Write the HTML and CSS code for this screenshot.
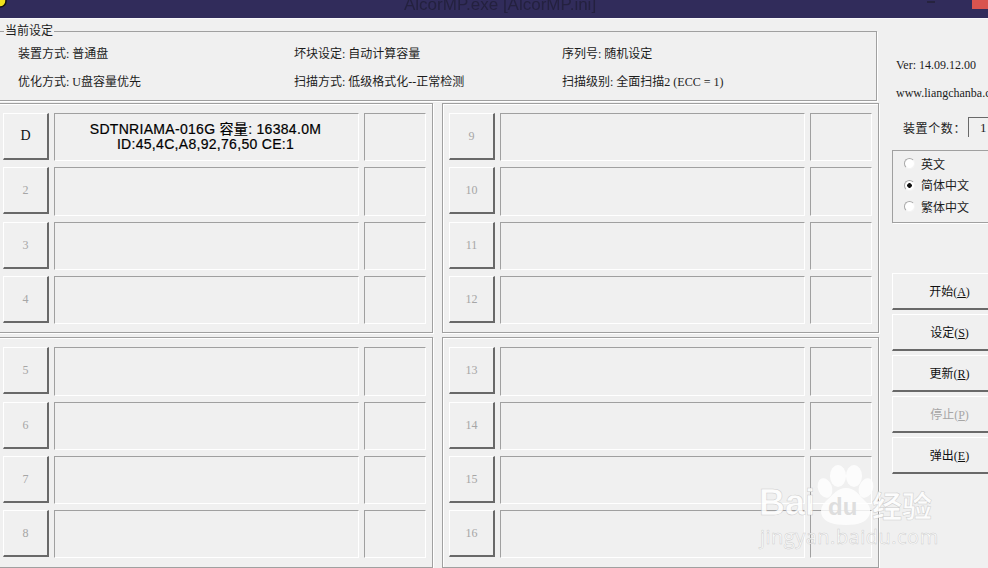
FILE: index.html
```html
<!DOCTYPE html>
<html lang="en">
<head>
    <meta charset="UTF-8">
    <meta name="viewport" content="width=device-width, initial-scale=1.0">
    <title>AlcorMP</title>
    <link rel="stylesheet" href="styles.css">
</head>
<body>
    <header class="titlebar">
        <svg class="app-icon" width="10" height="10" viewBox="0 0 10 10"><circle cx="0" cy="1" r="6" fill="#f2e21c" stroke="#15130f" stroke-width="1.5"/></svg>
        <span class="title">AlcorMP.exe [AlcorMP.ini]</span>
        <span class="win-min"></span>
        <span class="win-close"></span>
    </header>
    <main class="window">
        <div class="left">
            <fieldset class="settings">
                <legend>当前设定</legend>
                <div class="settings-grid">
                    <span>装置方式: 普通盘</span>
                    <span>坏块设定: 自动计算容量</span>
                    <span>序列号: 随机设定</span>
                    <span>优化方式: U盘容量优先</span>
                    <span>扫描方式: 低级格式化--正常检测</span>
                    <span>扫描级别: 全面扫描2 (ECC = 1)</span>
                </div>
            </fieldset>
            <div class="panels">
                <section class="panel">
                    <div class="row"><button class="slot active">D</button><div class="cell info"><b>SDTNRIAMA-016G 容量: 16384.0M</b><b>ID:45,4C,A8,92,76,50 CE:1</b></div><div class="cell"></div></div>
                    <div class="row"><button class="slot">2</button><div class="cell"></div><div class="cell"></div></div>
                    <div class="row"><button class="slot">3</button><div class="cell"></div><div class="cell"></div></div>
                    <div class="row"><button class="slot">4</button><div class="cell"></div><div class="cell"></div></div>
                </section>
                <section class="panel">
                    <div class="row"><button class="slot">9</button><div class="cell"></div><div class="cell"></div></div>
                    <div class="row"><button class="slot">10</button><div class="cell"></div><div class="cell"></div></div>
                    <div class="row"><button class="slot">11</button><div class="cell"></div><div class="cell"></div></div>
                    <div class="row"><button class="slot">12</button><div class="cell"></div><div class="cell"></div></div>
                </section>
                <section class="panel lower">
                    <div class="row"><button class="slot">5</button><div class="cell"></div><div class="cell"></div></div>
                    <div class="row"><button class="slot">6</button><div class="cell"></div><div class="cell"></div></div>
                    <div class="row"><button class="slot">7</button><div class="cell"></div><div class="cell"></div></div>
                    <div class="row"><button class="slot">8</button><div class="cell"></div><div class="cell"></div></div>
                </section>
                <section class="panel lower">
                    <div class="row"><button class="slot">13</button><div class="cell"></div><div class="cell"></div></div>
                    <div class="row"><button class="slot">14</button><div class="cell"></div><div class="cell"></div></div>
                    <div class="row"><button class="slot">15</button><div class="cell"></div><div class="cell"></div></div>
                    <div class="row"><button class="slot">16</button><div class="cell"></div><div class="cell"></div></div>
                </section>
            </div>
        </div>
        <aside class="side">
            <div class="meta version">Ver: 14.09.12.00</div>
            <div class="meta url">www.liangchanba.com</div>
            <div class="count">
                <span class="count-label">装置个数：</span>
                <span class="count-box">1</span>
            </div>
            <div class="lang">
                <label><input type="radio" name="lang">英文</label>
                <label><input type="radio" name="lang" checked>简体中文</label>
                <label><input type="radio" name="lang">繁体中文</label>
            </div>
            <div class="actions">
                <button class="action">开始(<u>A</u>)</button>
                <button class="action">设定(<u>S</u>)</button>
                <button class="action">更新(<u>R</u>)</button>
                <button class="action off">停止(<u>P</u>)</button>
                <button class="action">弹出(<u>E</u>)</button>
            </div>
        </aside>
    </main>
    <!-- watermark sits over the window -->
    <svg class="watermark" width="190" height="95" viewBox="0 0 190 95">
        <g class="paw">
            <ellipse cx="88" cy="21" rx="8" ry="11"/>
            <ellipse cx="104" cy="21" rx="8" ry="11"/>
            <ellipse cx="75" cy="33" rx="7" ry="10" transform="rotate(-20 75 33)"/>
            <ellipse cx="116" cy="33" rx="7" ry="10" transform="rotate(20 116 33)"/>
            <path d="M96 33c9 0 13 7 19 13 6 5 6 11 4 15-3 6-10 9-23 9s-21-3-24-9c-2-5-1-10 4-15 7-6 11-13 20-13z"/>
        </g>
        <text class="wm-big" x="9" y="60">Bai</text>
        <text class="wm-du" x="78" y="60">du</text>
        <text class="wm-cn" x="122" y="62">经验</text>
        <text class="wm-small" x="10" y="89">jingyan.baidu.com</text>
    </svg>
</body>
</html>
```

FILE: styles.css
```css
:root {
    --face: #f0f0f0;
    --line: #a0a0a0;
    --dark: #696969;
    --grey-text: #a6a6a6;
}
html, body {
    height: 100%; margin: 0; padding: 0;
}
body {
    width: 988px;
    height: 568px;
    overflow: hidden;
    position: relative;
    background: var(--face);
    color: #1c1c1c;
    font-family: "Liberation Serif", "Noto Sans CJK SC", serif;
    font-size: 12px;
}
.titlebar {
    height: 18px;
    display: flex;
    background: #312c5b;
    border-bottom: 1px solid #f8f8fb;
    overflow: hidden;
    position: relative;
}
.app-icon {
    flex: none;
}
.title {
    margin: -5px 0 0 394px;
    color: #24213f;
    font-family: "Liberation Sans", sans-serif;
    font-size: 17px;
    line-height: 19px;
    white-space: nowrap;
    filter: blur(0.5px);
}
.win-min {
    width: 8px;
    height: 2px;
    margin: 1px 0 0 331px;
    background: #26233f;
}
.win-close {
    width: 16px;
    height: 9px;
    margin-left: auto;
    background: #d9544f;
}
.window {
    display: flex;
    height: 549px;
}
.left {
    flex: none;
    width: 883px;
    margin-left: -4px;
}
.settings {
    box-sizing: border-box;
    width: 881px;
    height: 77px;
    margin: 5px 0 0 0;
    padding: 8px 0 0 21px;
    border: 1px solid var(--line);
    box-shadow: 1px 1px 0 #fff;
}
.settings legend {
    margin-left: -14px;
    padding: 0 1px;
    font-size: 12px;
    line-height: 14px;
}
.settings-grid {
    display: grid;
    grid-template-columns: 276px 268px 1fr;
    grid-auto-rows: 16px;
    row-gap: 12px;
    line-height: 16px;
}
.panels {
    display: grid;
    grid-template-columns: 437px 437px;
    grid-template-rows: 230px 231px;
    column-gap: 9px;
    row-gap: 4px;
    margin-top: 2px;
}
.panel {
    box-sizing: border-box;
    display: grid;
    grid-template-rows: 48px 49px 48px 48px;
    row-gap: 6px;
    align-content: start;
    padding: 9px 6px 0 6px;
    border: 1px solid var(--line);
    box-shadow: 1px 1px 0 #fff, inset 1px 1px 0 #fff;
}
.panel.lower {
    grid-template-rows: 49px 48px 48px 48px;
}
.row {
    display: grid;
    grid-template-columns: 46px 305px 62px;
    column-gap: 5px;
}
.slot {
    box-sizing: border-box;
    height: 47px;
    padding: 0;
    background: var(--face);
    border: 0;
    border-top: 1px solid #fff;
    border-left: 1px solid #fff;
    border-right: 2px solid var(--dark);
    border-bottom: 2px solid var(--dark);
    color: var(--grey-text);
    font-family: "Liberation Serif", serif;
    font-size: 12px;
}
.slot.active {
    color: #111;
    font-size: 14px;
}
.cell {
    box-sizing: border-box;
    border-top: 1px solid var(--line);
    border-left: 1px solid var(--line);
    border-right: 1px solid #fff;
    border-bottom: 1px solid #fff;
}
.info {
    display: flex;
    flex-direction: column;
    align-items: center;
    padding: 8px 2px 0 0;
    color: #000;
    font-family: "Liberation Sans", "Noto Sans CJK SC", sans-serif;
    font-size: 14px;
    line-height: 15px;
    letter-spacing: 0.3px;
}
.info b {
    font-weight: 400;
    -webkit-text-stroke: 0.2px #000;
}
.side {
    flex: none;
    width: 121px;
    padding-left: 13px;
    box-sizing: border-box;
    overflow: hidden;
}
.meta {
    margin-left: 4px;
    line-height: 14px;
    white-space: nowrap;
}
.version {
    margin-top: 39px;
}
.url {
    margin-top: 14px;
}
.count {
    display: flex;
    align-items: center;
    height: 20px;
    margin-top: 17px;
}
.count-label {
    margin: 2px 0 0 11px;
    letter-spacing: 0.6px;
    white-space: nowrap;
}
.count-box {
    box-sizing: border-box;
    flex: none;
    width: 30px;
    height: 20px;
    margin-left: 2px;
    padding-left: 11px;
    border-top: 1px solid var(--dark);
    border-left: 1px solid var(--dark);
    line-height: 19px;
    font-size: 13px;
}
.lang {
    box-sizing: border-box;
    display: flex;
    flex-direction: column;
    width: 110px;
    height: 73px;
    margin-top: 13px;
    padding: 2px 0 0 11px;
    border: 1px solid var(--line);
    box-shadow: 1px 1px 0 #fff;
}
.lang label {
    display: flex;
    align-items: center;
    height: 21.5px;
}
.lang input {
    appearance: none;
    box-sizing: border-box;
    width: 11px;
    height: 11px;
    margin: 0 6px 0 0;
    border-radius: 50%;
    border: 1px solid #a8a8a8;
    border-right-color: #f4f4f4;
    border-bottom-color: #f4f4f4;
    background: #fff;
}
.lang input:checked {
    background: radial-gradient(circle, #111 0 2px, #fff 2.6px);
}
.actions {
    display: flex;
    flex-direction: column;
    gap: 4px;
    margin-top: 50px;
}
.action {
    box-sizing: border-box;
    flex: none;
    width: 114px;
    height: 37px;
    padding: 0 0 1px 0;
    background: var(--face);
    border: 0;
    border-top: 1px solid #fff;
    border-left: 1px solid #fff;
    border-bottom: 2px solid var(--dark);
    color: #111;
    font-family: "Liberation Serif", "Noto Sans CJK SC", serif;
    font-size: 12px;
}
.action.off {
    color: var(--grey-text);
}
.watermark {
    position: absolute;
    left: 750px;
    top: 455px;
}
.paw {
    fill: rgba(255,255,255,0.8);
}
.watermark text {
    fill: rgba(255,255,255,0.85);
    stroke: rgba(160,160,160,0.5);
    stroke-width: 0.5px;
}
.wm-big {
    font-family: "Liberation Sans", sans-serif;
    font-size: 36px;
    font-weight: 700;
}
.watermark .wm-du {
    fill: #dedede;
    stroke: none;
    font-family: "Liberation Sans", sans-serif;
    font-size: 24px;
    font-weight: 700;
}
.wm-cn {
    font-family: "Noto Sans CJK SC", sans-serif;
    font-size: 30px;
    font-weight: 700;
}
.wm-small {
    font-family: "Open Sans", sans-serif;
    font-size: 20px;
    letter-spacing: 0.5px;
}
```
